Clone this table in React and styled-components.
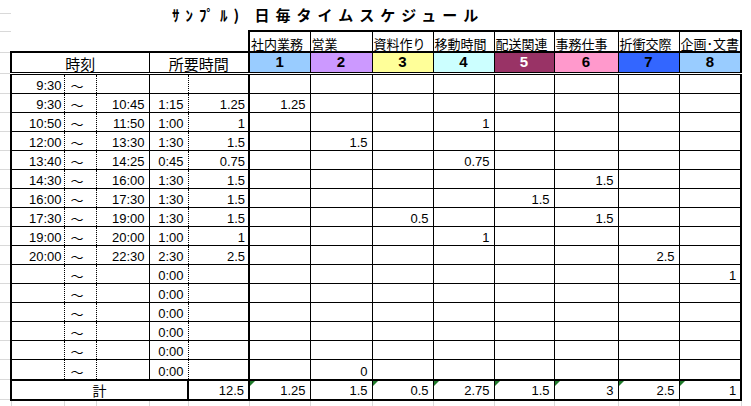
import React from 'react';
import styled, { createGlobalStyle, css } from 'styled-components';

const GRID = '#d9d9d9';
const CJK = '"Noto Sans CJK JP", "Liberation Sans", sans-serif';
const LATIN = '"Liberation Sans", "Noto Sans CJK JP", sans-serif';

const Global = createGlobalStyle`
  html, body { margin: 0; padding: 0; background: #fff; }
  body { font-family: ${LATIN}; color: #000; }
`;

const Sheet = styled.table`
  border-collapse: collapse;
  table-layout: fixed;
  width: 742px;
  font-size: 13px;
  line-height: 15px;
  td {
    padding: 0;
    white-space: nowrap;
    overflow: hidden;
    vertical-align: bottom;
  }
`;

const Col = styled.col`
  width: ${(p) => p.$w}px;
`;

const Row = styled.tr`
  height: ${(p) => p.$h}px;
`;

const Gutter = styled.td`
  border-bottom: ${(p) => (p.$plain ? 'none' : `1px solid ${GRID}`)};
`;

const TitleCell = styled.td`
  && {
    vertical-align: top;
    padding: 5px 0 0 161px;
  }
  font-family: ${CJK};
  font-weight: bold;
  font-size: 15px;
  line-height: 20px;
  letter-spacing: 6px;
`;

const Blank = styled.td``;

const catEdges = css`
  border-left: ${(p) => (p.$first ? '2px' : '1px')} solid #000;
  border-right: ${(p) => (p.$last ? '2px' : '1px')} solid #000;
`;

const CatName = styled.td`
  ${catEdges};
  border-top: 2px solid #000;
  font-family: ${CJK};
  font-size: 13px;
  && { padding: 0 0 0 1px; }
  text-align: left;
`;

const HeadCell = styled.td`
  border-top: 2px solid #000;
  border-bottom: 3px double #000;
  border-left: ${(p) => (p.$left ? '2px solid #000' : 'none')};
  border-right: 1px solid #000;
  font-family: ${CJK};
  font-size: 15px;
  line-height: 17px;
  text-align: center;
`;

const CatNum = styled.td`
  ${catEdges};
  border-top: 2px solid #000;
  border-bottom: 3px double #000;
  background: ${(p) => p.$bg};
  color: ${(p) => p.$fg};
  font-weight: bold;
  font-size: 15px;
  line-height: 17px;
  text-align: center;
  && { padding-bottom: 2px; }
`;

const dataCell = css`
  border-bottom: 1px solid #000;
  text-align: right;
  && { padding: 0 3px 0 0; }
`;

const StartCell = styled.td`
  ${dataCell};
  border-left: 2px solid #000;
  border-right: 1px dotted #000;
  && { padding-right: 2px; }
`;

const TildeCell = styled.td`
  ${dataCell};
  border-right: 1px dotted #000;
  text-align: left;
  font-family: ${CJK};
  && { padding: 0 0 0 6px; }
`;

const EndCell = styled.td`
  ${dataCell};
  border-right: 1px solid #000;
  && { padding-right: 4px; }
`;

const DurCell = styled.td`
  ${dataCell};
  border-right: 1px dotted #000;
  && { padding-right: 4px; }
`;

const HoursCell = styled.td`
  ${dataCell};
  border-right: 2px solid #000;
`;

const CatCell = styled.td`
  ${dataCell};
  ${catEdges};
  && { padding-right: 4px; }
`;

const TotalLabel = styled.td`
  border: 2px solid #000;
  font-family: ${CJK};
  font-size: 14px;
  line-height: 17px;
  text-align: center;
`;

const TotalCell = styled.td`
  border-top: 2px solid #000;
  border-bottom: 2px solid #000;
  border-left: ${(p) => (p.$first ? '2px' : '1px')} solid #000;
  border-right: ${(p) => (p.$last || p.$hours ? '2px' : '1px')} solid #000;
  text-align: right;
  position: relative;
  && { padding: 0 4px 1px 0; }
  ${(p) =>
    p.$mark &&
    css`
      &::before {
        content: '';
        position: absolute;
        left: 0;
        top: 0;
        border-style: solid;
        border-width: 5px 5px 0 0;
        border-color: #1f7a2a transparent transparent transparent;
      }
    `}
`;

const Tail = styled.td`
  border-left: 1px solid ${GRID};
  border-right: 1px solid ${GRID};
`;

const COLS = [11, 53, 32, 53, 39, 61, 61, 62, 61, 61, 60, 64, 61, 62];

const cats = [
  { name: '社内業務', n: 1, bg: '#99ccff', fg: '#000' },
  { name: '営業', n: 2, bg: '#cc99ff', fg: '#000' },
  { name: '資料作り', n: 3, bg: '#ffff99', fg: '#000' },
  { name: '移動時間', n: 4, bg: '#ccffff', fg: '#000' },
  { name: '配送関連', n: 5, bg: '#993366', fg: '#fff' },
  { name: '事務仕事', n: 6, bg: '#ff99cc', fg: '#000' },
  { name: '折衝交際', n: 7, bg: '#3366ff', fg: '#000' },
  { name: '企画･文書', n: 8, bg: '#99ccff', fg: '#000' },
];

const rows = [
  { s: '9:30', e: '', d: '', h: '', v: {} },
  { s: '9:30', e: '10:45', d: '1:15', h: '1.25', v: { 1: '1.25' } },
  { s: '10:50', e: '11:50', d: '1:00', h: '1', v: { 4: '1' } },
  { s: '12:00', e: '13:30', d: '1:30', h: '1.5', v: { 2: '1.5' } },
  { s: '13:40', e: '14:25', d: '0:45', h: '0.75', v: { 4: '0.75' } },
  { s: '14:30', e: '16:00', d: '1:30', h: '1.5', v: { 6: '1.5' } },
  { s: '16:00', e: '17:30', d: '1:30', h: '1.5', v: { 5: '1.5' } },
  { s: '17:30', e: '19:00', d: '1:30', h: '1.5', v: { 3: '0.5', 6: '1.5' } },
  { s: '19:00', e: '20:00', d: '1:00', h: '1', v: { 4: '1' } },
  { s: '20:00', e: '22:30', d: '2:30', h: '2.5', v: { 7: '2.5' } },
  { s: '', e: '', d: '0:00', h: '', v: { 8: '1' } },
  { s: '', e: '', d: '0:00', h: '', v: {} },
  { s: '', e: '', d: '0:00', h: '', v: {} },
  { s: '', e: '', d: '0:00', h: '', v: {} },
  { s: '', e: '', d: '0:00', h: '', v: {} },
  { s: '', e: '', d: '0:00', h: '', v: { 2: '0' } },
];

const totals = ['1.25', '1.5', '0.5', '2.75', '1.5', '3', '2.5', '1'];
const marked = [true, false, true, true, true, true, true, true];

export default function App() {
  return (
    <>
      <Global />
      <Sheet>
        <colgroup>
          {COLS.map((w, i) => (
            <Col key={i} $w={w} />
          ))}
        </colgroup>
        <tbody>
          <Row $h={13}>
            <Gutter />
            <TitleCell colSpan={13} rowSpan={2}>
              ｻﾝﾌﾟﾙ) 日毎タイムスケジュール
            </TitleCell>
          </Row>
          <Row $h={18}>
            <Gutter />
          </Row>
          <Row $h={21}>
            <Gutter />
            <Blank colSpan={5} />
            {cats.map((c, i) => (
              <CatName key={c.n} $first={i === 0} $last={i === 7}>
                {c.name}
              </CatName>
            ))}
          </Row>
          <Row $h={20}>
            <Gutter />
            <HeadCell colSpan={3} $left>
              時刻
            </HeadCell>
            <HeadCell colSpan={2}>所要時間</HeadCell>
            {cats.map((c, i) => (
              <CatNum key={c.n} $first={i === 0} $last={i === 7} $bg={c.bg} $fg={c.fg}>
                {c.n}
              </CatNum>
            ))}
          </Row>
          {rows.map((r, ri) => (
            <Row key={ri} $h={ri === 0 || ri === rows.length - 1 ? 20 : 19}>
              <Gutter />
              <StartCell>{r.s}</StartCell>
              <TildeCell>～</TildeCell>
              <EndCell>{r.e}</EndCell>
              <DurCell>{r.d}</DurCell>
              <HoursCell>{r.h}</HoursCell>
              {cats.map((c, ci) => (
                <CatCell key={c.n} $first={ci === 0} $last={ci === 7}>
                  {r.v[c.n] || ''}
                </CatCell>
              ))}
            </Row>
          ))}
          <Row $h={20}>
            <Gutter />
            <TotalLabel colSpan={4}>計</TotalLabel>
            <TotalCell $hours>12.5</TotalCell>
            {totals.map((t, i) => (
              <TotalCell key={i} $first={i === 0} $last={i === 7} $mark={marked[i]}>
                {t}
              </TotalCell>
            ))}
          </Row>
          <Row $h={8}>
            <Gutter $plain />
            {COLS.slice(1).map((_, i) => (
              <Tail key={i} />
            ))}
          </Row>
        </tbody>
      </Sheet>
    </>
  );
}
